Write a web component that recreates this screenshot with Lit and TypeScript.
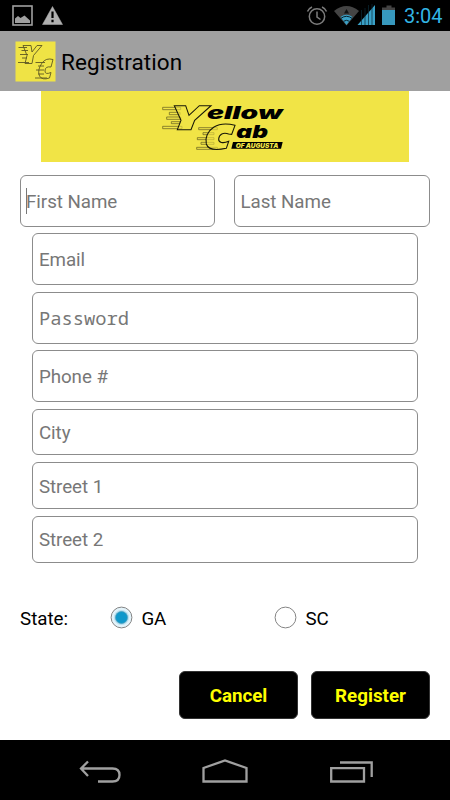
import { LitElement, html, css, svg } from "lit";
import { customElement, property } from "lit/decorators.js";

const letterY = "M103 53H137L147 82L178 53H213L164 97L153 125H112L123 97Z";
const letterC =
  "M285 112C262 106 240 106 222 117C203 129 194 150 199 168C204 184 226 188 259 181L266 160C249 167 235 164 236 153C237 139 250 132 266 138L275 139Z";
const speedLines =
  "M68 58H122V65H68ZM88 73H120V80H88ZM80 87H122V94H80ZM94 101H120V107H94ZM68 115H126V122H68ZM176 119H232V125H176ZM189 134H222V140H189ZM172 149H222V155H172ZM183 163H222V169H183ZM170 178H232V184H170Z";

@customElement("status-bar")
class StatusBar extends LitElement {
  static styles = css`
    :host { display: block; height: 31px; background: #000; }
    svg { display: block; }
  `;
  render() {
    return html`<svg width="450" height="31" viewBox="0 0 450 31">
      <rect x="13" y="6" width="19" height="19" fill="none" stroke="#a0a0a0" stroke-width="1.600" />
      <path d="M15 23v-4.500l3-2.500 2.500 2 4-2.500 5.500 5v2.500z" fill="#a0a0a0" />
      <path d="M52.500 6.500L62.500 24.500H42.500Z" fill="#b0b0b0" stroke="#b0b0b0" stroke-width=".5" stroke-linejoin="round" />
      <path d="M52.500 11.500v6.500M52.500 19.700v2.500" stroke="#000" stroke-width="2.200" />
      <g fill="none" stroke="#7c7c7c" stroke-width="1.500">
        <circle cx="317" cy="16.500" r="7.700" />
        <path d="M317 11.500v5.500l3.500 2.500M307.500 11.500q1-3 4.500-4.500M326.500 11.500q-1-3-4.500-4.500" />
      </g>
      <path d="M334 11Q346.500 1 359 11L346.500 25.500Z" fill="#444" />
      <path d="M346.500 9l2.500 4.500h-5z" fill="#111" />
      <path d="M340.500 17Q346.500 12.500 352.500 17L346.500 25Z" fill="#3aa0c6" />
      <path d="M341 18.300q5.500-4 11 0M343.500 21.300q3-2 6 0" fill="none" stroke="#08222c" stroke-width="1" />
      <path d="M357.500 25L375 5V25Z" fill="#3aa0c6" />
      <path d="M361.500 10v15M365 8v17M368.500 5v20M372 4v21" stroke="#0a2a36" stroke-width=".7" />
      <path d="M382 7.500h4.500v-2h5v2h3.500v2.500h-13z" fill="#444" />
      <path d="M382 10h13v15h-13z" fill="#3798bd" />
      <text x="404" y="23" font-family="Roboto, sans-serif" font-size="20.500" fill="#33b5e5" textLength="38.500" lengthAdjust="spacingAndGlyphs">3:04</text>
    </svg>`;
  }
}

@customElement("title-bar")
class TitleBar extends LitElement {
  static styles = css`
    :host {
      display: flex; align-items: center; box-sizing: border-box; height: 60px;
      padding-left: 15px; background: #a0a0a0; color: #000;
      font: 22.5px/30px Roboto, sans-serif;
    }
    svg { display: block; margin-right: 5px; }
    .title { padding-top: 2px; letter-spacing: 0.07px; }
  `;
  render() {
    return html`<svg width="41" height="41" viewBox="0 0 41 41">
        <rect x=".5" y=".5" width="40" height="40" fill="#efe345" />
        <g fill="none" stroke="#5d5823" stroke-width=".9">
          <path d="M8 4.500H16L17 11L22 4.500H27L18.500 14.500L17 22.500H10L12 14.500Z" />
          <path d="M38 18.500Q31 16.500 27 22Q22 29 24.500 35Q27 39.500 34.500 37L36 31.500Q30 34 30 30Q30 25 36 26Z" />
          <path d="M3.500 6.500H12M6.500 9.500H13M5 13.500H13M7 17H12M3 21.500H14M20.500 21.500H30M23 25H29M21 29H29M23 33H29M20 37H32" />
        </g>
      </svg><span class="title">Registration</span>`;
  }
}

@customElement("cab-banner")
class CabBanner extends LitElement {
  static styles = css`
    :host { display: block; margin: 0 41px; height: 71px; background: #f1e446; }
    svg { display: block; }
    text { font-family: Inter, "Open Sans", sans-serif; font-weight: 900; font-style: italic; }
  `;
  render() {
    return html`<svg width="368" height="71" viewBox="0 0 368 71">
      <g transform="translate(99,-3) scale(.33333)">
        <path d=${speedLines} fill="none" stroke="#5a551f" stroke-width="2" />
        <path d=${letterY} fill="#f1e446" fill-opacity=".6" stroke="#171608" stroke-width="3.200" />
        <path d=${letterC} fill="#f1e446" fill-opacity=".6" stroke="#171608" stroke-width="3.200" />
        <text x="201" y="93" font-size="51" textLength="227" lengthAdjust="spacingAndGlyphs">ellow</text>
        <text x="289" y="151" font-size="53" textLength="95" lengthAdjust="spacingAndGlyphs">ab</text>
        <path d="M279 162H428L423 182H274Z" />
        <text x="287" y="179" font-size="19.500" fill="#f1e446" textLength="128" lengthAdjust="spacingAndGlyphs">OF AUGUSTA</text>
      </g>
    </svg>`;
  }
}

@customElement("form-field")
class FormField extends LitElement {
  @property() label = "";
  @property({ type: Boolean }) active = false;
  static styles = css`
    :host {
      display: flex; align-items: center; box-sizing: border-box;
      border: 1px solid #8c8c8c; border-radius: 6px; background: #fff;
      padding-left: 5.5px; color: #777; font-size: 18.75px; line-height: 24px;
      letter-spacing: -0.05px;
    }
    .label { padding-top: 2px; }
    :host(.mono) { letter-spacing: 0; }
    :host(.mono) .label { padding-top: 0; }
    :host([active]) { padding-left: 5px; }
    .caret { width: 1px; height: 26px; background: #777; margin-right: -1px; }
  `;
  render() {
    return html`${this.active ? html`<span class="caret"></span>` : ""}<span class="label">${this.label}</span>`;
  }
}

@customElement("nav-bar")
class NavBar extends LitElement {
  static styles = css`
    :host { display: block; height: 60px; background: #000; }
    svg { display: block; }
  `;
  render() {
    return html`<svg width="450" height="60" viewBox="0 0 450 60">
      <g fill="none" stroke="#a0a0a0" stroke-width="2.300">
        <path d="M81 28.500H112.500Q119.500 28.500 119.500 35T112.500 41.500H98M88 21.500L81 28.500L88 36" />
        <path d="M203.500 41.500V28L225 20.500L246.500 28V41.500Z" />
        <path d="M331.200 28.200H364V41.500H331.200ZM340 22.500H371.700V37" />
      </g>
    </svg>`;
  }
}

@customElement("app-root")
class AppRoot extends LitElement {
  static styles = css`
    :host {
      display: flex; flex-direction: column; width: 450px; height: 800px;
      background: #fff; font-family: Roboto, sans-serif; overflow: hidden;
    }
    .names { display: grid; grid-template-columns: 195px 196px; gap: 19px; margin: 13px 20px 0; }
    .fields { display: grid; gap: 6.5px; margin: 6px 32.4px 0; }
    .tall { height: 52px; }
    .short { height: 47px; }
    .city { height: 46px; margin-bottom: 1px; }
    .mono { font-family: "Noto Sans Mono", "DejaVu Sans Mono", monospace; }
    .state { display: flex; align-items: center; margin: 41.5px 20px 0; height: 26px; font-size: 18.75px; line-height: 26px; }
    .caption { flex: none; width: 90px; padding-top: 3px; }
    .option { flex: none; display: flex; align-items: center; width: 164px; }
    .option svg { flex: none; }
    .option span { margin-left: 8.5px; padding-top: 3px; letter-spacing: -0.2px; }
    .actions { display: flex; justify-content: flex-end; gap: 13px; margin: 41px 20px 0; }
    .button {
      width: 119px; height: 48px; box-sizing: border-box; border: 1px solid #333; border-radius: 6px;
      background: #000; color: #ff0; font: bold 18.75px/24px Roboto, sans-serif; text-align: center;
      padding: 2px 0 0;
    }
    nav-bar { margin-top: auto; }
  `;
  render() {
    const option = (label: string, on: boolean) => html`<div class="option">
      <svg width="23" height="23" viewBox="0 0 23 23">
        <circle cx="11.500" cy="11.500" r="10.400" fill=${on ? "#e3f3fa" : "#fff"} stroke="#858585" stroke-width="1" />
        ${on
          ? svg`<circle cx="11.500" cy="11.500" r="7.600" fill="#b9e0f0"/><circle cx="11.500" cy="11.500" r="6" fill="#0f98cb" stroke="#4b9fbd" stroke-width=".8"/>`
          : ""}
      </svg><span>${label}</span></div>`;
    return html`
      <status-bar></status-bar>
      <title-bar></title-bar>
      <cab-banner></cab-banner>
      <div class="names">
        <form-field class="tall" label="First Name" active></form-field>
        <form-field class="tall" label="Last Name"></form-field>
      </div>
      <div class="fields">
        <form-field class="tall" label="Email"></form-field>
        <form-field class="tall mono" label="Password"></form-field>
        <form-field class="tall" label="Phone #"></form-field>
        <form-field class="city" label="City"></form-field>
        <form-field class="short" label="Street 1"></form-field>
        <form-field class="short" label="Street 2"></form-field>
      </div>
      <div class="state">
        <span class="caption">State:</span>
        ${option("GA", true)}${option("SC", false)}
      </div>
      <div class="actions">
        <button class="button">Cancel</button>
        <button class="button">Register</button>
      </div>
      <nav-bar></nav-bar>
    `;
  }
}
